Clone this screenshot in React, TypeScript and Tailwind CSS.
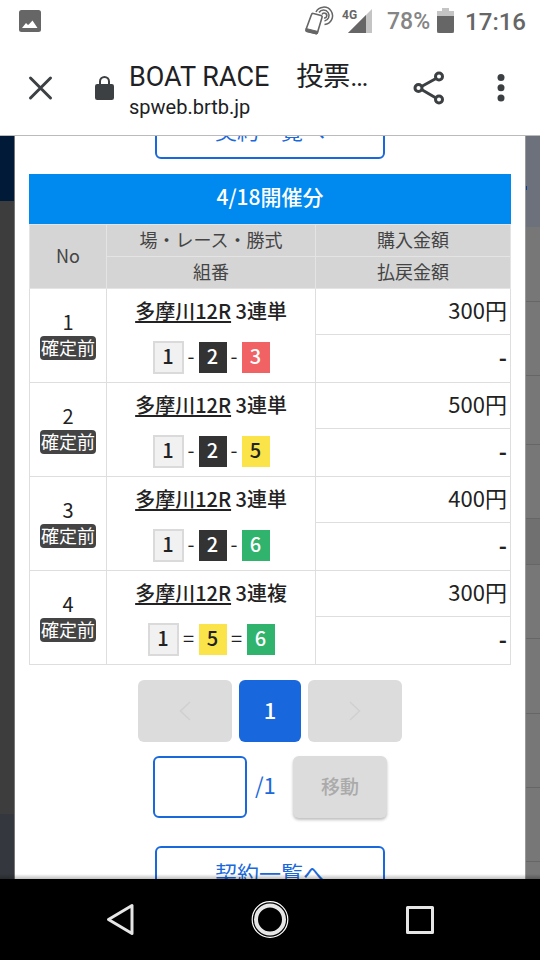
import { Fragment } from "react";
import clsx from "clsx";

type Boat = 1 | 2 | 3 | 5 | 6;

interface Bet {
  no: number;
  race: string;
  type: string;
  separator: "-" | "=";
  boats: Boat[];
  amount: string;
}

const bets: Bet[] = [
  { no: 1, race: "多摩川12R", type: "3連単", separator: "-", boats: [1, 2, 3], amount: "300円" },
  { no: 2, race: "多摩川12R", type: "3連単", separator: "-", boats: [1, 2, 5], amount: "500円" },
  { no: 3, race: "多摩川12R", type: "3連単", separator: "-", boats: [1, 2, 6], amount: "400円" },
  { no: 4, race: "多摩川12R", type: "3連複", separator: "=", boats: [1, 5, 6], amount: "300円" },
];

const boatColors: Record<Boat, string> = {
  1: "h-[33px] w-[31px] border-2 border-[#dadada] bg-[#f1f1f1] text-[#222]",
  2: "h-[31px] w-7 bg-[#333] text-white",
  3: "h-[31px] w-7 bg-[#f16264] text-white",
  5: "h-[31px] w-7 bg-[#fbe34a] text-[#222]",
  6: "h-[31px] w-7 bg-[#2fb36d] text-white",
};

function StatusBar() {
  return (
    <div className="flex h-[41px] shrink-0 items-center pr-[14px] pl-[19px] text-[#666]">
      <svg className="h-[22px] w-[22px]" viewBox="0 0 22 22" aria-hidden="true">
        <rect width="22" height="22" rx="2.500" fill="#666" />
        <path d="M3 18l4-5 2 2 1-.8 3.500-3.700L18.500 18z" fill="#fff" />
      </svg>
      <svg className="ml-auto h-[30px] w-[30px]" viewBox="0 0 30 30" fill="none" stroke="#666" aria-hidden="true">
        <path d="M7.500 8.500Q8 7 9.500 7.500L17 9.500Q18.500 10 18 11.500L13.500 26.500Q13 28 11.500 27.500L3 25.500Q1.500 25 2 23.500z" strokeWidth="1.600" />
        <path d="M2 22.500l12 3-1 2.500-10-2.500z" fill="#666" strokeWidth="1" />
        <path d="M12 6A8.700 8.700 0 1 1 20.500 18.500" strokeWidth="1.500" />
        <path d="M15 6.500A5.500 5.500 0 1 1 20.500 15" strokeWidth="1.500" />
        <path d="M18 8.500A2.500 2.500 0 1 1 20 12" strokeWidth="1.600" />
      </svg>
      <div className="relative ml-2 h-6 w-[30px]">
        <svg className="h-6 w-[30px]" viewBox="0 0 30 24" aria-hidden="true">
          <path d="M30 0v24H6z" fill="#c4c4c4" />
          <path d="M24 6v18H6z" fill="#666" />
        </svg>
        <span className="absolute -top-px left-0 text-[12px] leading-[14px] font-bold">4G</span>
      </div>
      <span className="ml-[15px] pt-[2px] text-[23px] leading-7 font-medium text-[#858585]">78%</span>
      <svg className="ml-[7px] h-[25px] w-[17px]" viewBox="0 0 17 25" aria-hidden="true">
        <path d="M5 0h7v3h5v22H0V3h5z" fill="#c4c4c4" />
        <path d="M0 8h17v15q0 2-2 2H2q-2 0-2-2z" fill="#666" />
      </svg>
      <span className="ml-[11px] pt-[2px] text-[24px] leading-7 font-medium">17:16</span>
    </div>
  );
}

function BrowserBar() {
  return (
    <header className="flex h-[94px] shrink-0 items-center pr-[18px] pl-[25px] text-[#202124]">
      <button type="button" aria-label="閉じる">
        <svg className="h-8 w-8" viewBox="0 0 32 32" stroke="#3c4043" strokeWidth="3" strokeLinecap="round">
          <path d="M5.500 6l20 20M25.500 6l-20 20" />
        </svg>
      </button>
      <svg className="ml-[38px] h-6 w-[19px]" viewBox="0 0 19 24" aria-hidden="true">
        <path d="M5 9V5.500a4.500 4.500 0 0 1 9 0v3.500" fill="none" stroke="#3c4043" strokeWidth="2" />
        <rect y="8" width="19" height="16" rx="2.200" fill="#3c4043" />
      </svg>
      <div className="ml-[15px] flex-1 pt-[5px] whitespace-nowrap">
        <h1 className="text-[27px] leading-8">BOAT RACE　投票…</h1>
        <p className="text-[20px] leading-7">spweb.brtb.jp</p>
      </div>
      <button type="button" aria-label="共有">
        <svg className="h-9 w-9" viewBox="0 0 36 36" fill="none" stroke="#3c4043" strokeWidth="3">
          <path d="M10.500 16.500L25 8.500M10.500 19.500L25 28" />
          <circle cx="7.500" cy="18" r="3.500" fill="#fff" />
          <circle cx="28" cy="6.500" r="3.500" fill="#fff" />
          <circle cx="28" cy="29.500" r="3.500" fill="#fff" />
        </svg>
      </button>
      <button type="button" aria-label="メニュー" className="ml-[39px]">
        <svg className="h-9 w-9" viewBox="0 0 36 36" fill="#3c4043">
          <circle cx="15" cy="7.500" r="3.500" />
          <circle cx="15" cy="17.700" r="3.500" />
          <circle cx="15" cy="28" r="3.500" />
        </svg>
      </button>
    </header>
  );
}

// Slivers of the dimmed page that stay visible beside the dialog
function LeftBackdrop() {
  return (
    <div className="flex w-[15px] shrink-0 flex-col border-r border-[#777]" aria-hidden="true">
      <div className="h-[65px] bg-[#001a38]" />
      <div className="h-[613px] bg-[#3d3d3d]" />
      <div className="flex-1 bg-[#34383e]" />
    </div>
  );
}

function RightBackdrop() {
  return (
    <div className="flex w-[15px] shrink-0 flex-col border-l border-[#999] bg-[#777]" aria-hidden="true">
      <div className="flex h-[91px] items-center bg-[#6c717b]">
        <div className="mt-3 h-1 w-px bg-[#0a3b8c]" />
      </div>
      <div className="h-[75px] border-b border-[#666]" />
      <div className="h-[74px] border-b border-[#666]" />
      <div className="h-[69px] border-b border-[#666]" />
      <div className="h-[74px] border-b border-[#666]" />
      <div className="h-[46px] border-b border-[#666] bg-[#707070]" />
      <div className="h-[74px] border-b border-[#666]" />
      <div className="h-[75px] border-b border-[#666]" />
      <div className="h-[74px] border-b border-[#666]" />
      <div className="h-[74px] border-b border-[#666]" />
    </div>
  );
}

function ContractsButton() {
  return (
    <button
      type="button"
      className="h-14 w-[230px] shrink-0 rounded-md border-2 border-[#1a69dc] bg-white pb-1 text-[22px] leading-7 text-[#1a69dc]"
    >
      契約一覧へ
    </button>
  );
}

function BetTable() {
  return (
    <table className="w-full table-fixed border-collapse text-center text-[#222]">
      <caption className="h-[50px] bg-[#0089ee] text-[21px] leading-[45px] font-medium text-white">4/18開催分</caption>
      <colgroup>
        <col className="w-[16%]" />
        <col className="w-[43.5%]" />
        <col />
      </colgroup>
      <thead className="bg-[#d5d5d5] text-[18px] leading-6 text-[#444]">
        <tr className="h-8">
          <th rowSpan={2} className="border border-[#e4e4e4] pb-[3px] font-normal">No</th>
          <th className="border border-[#e4e4e4] pb-[3px] font-normal">場・レース・勝式</th>
          <th className="border border-[#e4e4e4] pb-[3px] font-normal">購入金額</th>
        </tr>
        <tr className="h-8">
          <th className="border border-[#e4e4e4] pb-[3px] font-normal">組番</th>
          <th className="border border-[#e4e4e4] pb-[3px] font-normal">払戻金額</th>
        </tr>
      </thead>
      <tbody>
        {bets.map((bet) => (
          <Fragment key={bet.no}>
            <tr className="h-[46px]">
              <td rowSpan={2} className="border border-[#dedede] pb-[3px]">
                <div className="text-[20px] leading-7">{bet.no}</div>
                <span className="inline-block h-6 rounded bg-[#444] px-px text-[18px] leading-[22px] text-white">確定前</span>
              </td>
              <td rowSpan={2} className="border border-[#dedede]">
                <div className="text-[20px] leading-7 font-medium">
                  <a href="#race" className="underline decoration-2 underline-offset-2 [text-decoration-skip-ink:none]">{bet.race}</a> {bet.type}
                </div>
                <div className="mt-4 flex items-center justify-center text-[20px] leading-7">
                  {bet.boats.map((boat, i) => (
                    <Fragment key={boat}>
                      {i > 0 && <span className={clsx("pb-1", bet.separator === "=" ? "w-5" : "w-[15px]")}>{bet.separator}</span>}
                      <span className={clsx("flex items-center justify-center pb-[3px] font-medium", boatColors[boat])}>{boat}</span>
                    </Fragment>
                  ))}
                </div>
              </td>
              <td className="border border-[#dedede] pr-[3px] pb-[6px] text-right text-[22px] leading-7">{bet.amount}</td>
            </tr>
            <tr className="h-12">
              <td className="border border-[#dedede] pr-[3px] pb-[6px] text-right text-[22px] leading-7 font-bold">-</td>
            </tr>
          </Fragment>
        ))}
      </tbody>
    </table>
  );
}

function Pager() {
  return (
    <>
      <nav className="mt-[15px] flex justify-center gap-[7px]">
        <button type="button" disabled aria-label="前へ" className="flex h-[62px] w-[94px] items-center justify-center rounded-md bg-[#dcdcdc]">
          <svg className="h-5 w-3" viewBox="0 0 12 20" fill="none" stroke="#d0d0d0" strokeWidth="1.500">
            <path d="M11 1L1.500 10l9.500 9" />
          </svg>
        </button>
        <button type="button" className="h-[62px] w-[62px] rounded-md bg-[#1867dc] pb-1 text-[22px] leading-7 font-medium text-white">1</button>
        <button type="button" disabled aria-label="次へ" className="flex h-[62px] w-[94px] items-center justify-center rounded-md bg-[#dcdcdc]">
          <svg className="h-5 w-3" viewBox="0 0 12 20" fill="none" stroke="#d0d0d0" strokeWidth="1.500">
            <path d="M1 1l9.500 9L1 19" />
          </svg>
        </button>
      </nav>
      <form className="mt-[14px] flex items-center justify-center">
        <input type="text" aria-label="ページ番号" className="h-[62px] w-[94px] rounded-md border-2 border-[#1a69dc] bg-white px-2 text-[22px]" />
        <span className="w-[46px] pb-[6px] pl-2 text-[22px] leading-7 text-[#1a69dc]">/1</span>
        <button type="button" disabled className="h-[62px] w-[94px] rounded-md bg-[#dcdcdc] pb-[3px] text-[19px] leading-7 font-medium text-[#aaa] shadow-[0_2px_3px_rgba(0,0,0,0.25)]">
          移動
        </button>
      </form>
    </>
  );
}

function SystemNav() {
  return (
    <nav className="grid h-[81px] shrink-0 grid-cols-3 place-items-center bg-black px-[45px]">
      <button type="button" aria-label="戻る">
        <svg className="h-10 w-10" viewBox="0 0 40 40" fill="none" stroke="#e6e6e6" strokeWidth="3" strokeLinejoin="round">
          <path d="M32 5.500v28L8.500 19.500z" />
        </svg>
      </button>
      <button type="button" aria-label="ホーム">
        <svg className="h-10 w-10" viewBox="0 0 40 40" fill="none">
          <circle cx="20" cy="19.500" r="17.800" stroke="#fff" strokeWidth="1.200" />
          <circle cx="20" cy="19.500" r="14" stroke="#e6e6e6" strokeWidth="4" />
        </svg>
      </button>
      <button type="button" aria-label="履歴">
        <svg className="h-10 w-10" viewBox="0 0 40 40" fill="none" stroke="#e6e6e6" strokeWidth="3" strokeLinejoin="round">
          <rect x="7.500" y="7.500" width="25" height="25" />
        </svg>
      </button>
    </nav>
  );
}

export default function App() {
  return (
    <div className="flex h-screen flex-col bg-white font-['Roboto','Noto_Sans_CJK_JP',sans-serif]">
      <StatusBar />
      <BrowserBar />
      <div className="relative flex min-h-0 flex-1 overflow-hidden border-t border-[#bbb] font-['Noto_Sans_CJK_JP',sans-serif]">
        <LeftBackdrop />
        <main className="min-w-0 flex-1 bg-white px-[14px]">
          {/* scrolled up, only the lower edge of this one shows */}
          <div className="flex h-[23px] items-end justify-center overflow-hidden">
            <ContractsButton />
          </div>
          <div className="mt-[15px]">
            <BetTable />
          </div>
          <Pager />
          <div className="mt-7 flex justify-center">
            <ContractsButton />
          </div>
        </main>
        <RightBackdrop />
        <div className="absolute inset-x-0 bottom-0 h-[5px] bg-linear-to-t from-black/25 to-transparent" />
      </div>
      <SystemNav />
    </div>
  );
}
